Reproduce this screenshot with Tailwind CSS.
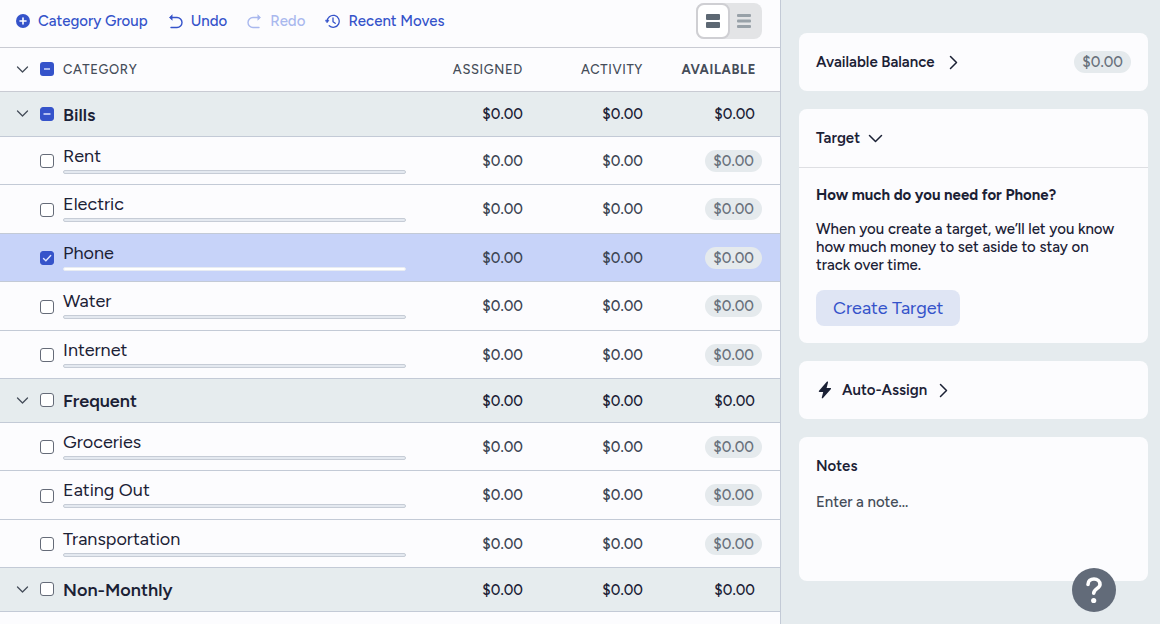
<!DOCTYPE html>
<html lang="en">
<head>
<meta charset="utf-8">
<meta name="viewport" content="width=device-width, initial-scale=1">
<title>Budget</title>
<script src="https://cdn.jsdelivr.net/npm/@tailwindcss/browser@4"></script>
</head>
<body class="flex h-screen overflow-hidden bg-[#e5ebee] font-['Figtree','Lato',sans-serif] text-[15px] text-[#1b2135]">

<main class="flex min-w-0 flex-1 flex-col border-r border-[#c3cad6] bg-[#fcfcfe]">
  <header class="flex h-12 shrink-0 items-center border-b border-[#c9cbd3] pr-[18px] pl-4 pb-[5px] text-[#3553ca]">
    <nav class="flex flex-1 items-center gap-5 font-medium" aria-label="Budget actions">
      <button type="button" class="flex items-center gap-2">
        <svg class="size-[14px]" viewBox="0 0 14 14" aria-hidden="true"><circle cx="7" cy="7" r="7" fill="currentColor"/><path d="M7 4v6M4 7h6" stroke="#fff" stroke-width="1.6" stroke-linecap="round"/></svg>
        Category Group
      </button>
      <button type="button" class="flex items-center gap-2">
        <svg class="size-[15px]" viewBox="0 0 15 15" fill="none" stroke="currentColor" stroke-width="1.4" stroke-linecap="round" stroke-linejoin="round" aria-hidden="true"><path d="M2.500 3.500H9a5 5 0 0 1 0 10H3"/><path d="M4 1 1.400 3.500 4 6Z" fill="currentColor" stroke-width=".6"/></svg>
        Undo
      </button>
      <button type="button" disabled class="flex items-center gap-2 text-[#a9b8ee]">
        <svg class="size-[15px]" viewBox="0 0 15 15" fill="none" stroke="currentColor" stroke-width="1.4" stroke-linecap="round" stroke-linejoin="round" aria-hidden="true"><path d="M12.500 3.500H6a5 5 0 0 0 0 10h6"/><path d="m11 1 2.600 2.500L11 6Z" fill="currentColor" stroke-width=".6"/></svg>
        Redo
      </button>
      <button type="button" class="flex items-center gap-2">
        <svg class="size-[15px]" viewBox="0 0 15 15" fill="none" stroke="currentColor" stroke-width="1.300" stroke-linecap="round" stroke-linejoin="round" aria-hidden="true"><path d="M2.200 7.500a6 6 0 1 1 2 4.300"/><path d="M8 4v3.700l2.200 1.600"/><path d="M.5 6.300h3.500L2.250 8.600Z" fill="currentColor" stroke-width=".6"/></svg>
        Recent Moves
      </button>
    </nav>
    <div class="flex rounded-lg bg-[#e3e4e6] text-[#5d6873]" role="group" aria-label="Row density">
      <button type="button" aria-label="Comfortable view" aria-pressed="true" class="grid h-9 w-[34px] place-items-center rounded-lg border-2 border-[#cfcfd3] bg-white">
        <svg class="h-[14px] w-[14px]" viewBox="0 0 14 14" fill="currentColor" aria-hidden="true"><rect width="14" height="6" rx="1"/><rect y="8" width="14" height="6" rx="1"/></svg>
      </button>
      <button type="button" aria-label="Compact view" aria-pressed="false" class="grid h-9 w-8 place-items-center pr-1 text-[#98a1a8]">
        <svg class="h-[14px] w-[14px]" viewBox="0 0 14 14" fill="currentColor" aria-hidden="true"><rect width="14" height="3" rx="1"/><rect y="5.500" width="14" height="3" rx="1"/><rect y="11" width="14" height="3" rx="1"/></svg>
      </button>
    </div>
  </header>

  <table class="w-full table-fixed border-collapse text-right font-medium">
    <colgroup><col class="w-10"><col class="w-[23px]"><col><col class="w-[117px]"><col class="w-[120px]"><col class="w-[137px]"></colgroup>
    <thead class="text-[13px] tracking-wider text-[#454d59]">
      <tr class="h-[43px] border-b border-[#c9cbd3]">
        <th class="p-0 pl-4 font-normal"><button type="button" aria-label="Collapse all groups" class="block"><svg class="h-[13px] w-[13px]" viewBox="0 0 13 13" fill="none" stroke="#454d59" stroke-width="1.300" stroke-linecap="round" stroke-linejoin="round" aria-hidden="true"><path d="m1.500 4 5 5 5-5"/></svg></button></th>
        <th class="p-0 font-normal"><span class="grid w-[14px] place-items-center"><input type="checkbox" checked aria-label="Select all" class="col-start-1 row-start-1 size-[14px] appearance-none rounded-[3px] bg-[#3553ca]"><svg class="pointer-events-none col-start-1 row-start-1 size-[14px]" viewBox="0 0 14 14" stroke="#dfe5ff" stroke-width="1.400" aria-hidden="true"><path d="M4 7h6"/></svg></span></th>
        <th scope="col" class="p-0 text-left font-medium">CATEGORY</th>
        <th scope="col" class="p-0 font-medium">ASSIGNED</th>
        <th scope="col" class="p-0 font-medium">ACTIVITY</th>
        <th scope="col" class="p-0 pr-6 font-bold">AVAILABLE</th>
      </tr>
    </thead>
    <tbody id="rows"></tbody>
  </table>
</main>

<aside class="flex w-[379px] shrink-0 flex-col gap-[18px] pt-[33px] pr-3 pl-[18px]">
  <section class="flex h-[58px] shrink-0 items-center justify-between rounded-lg bg-[#fcfcfe] px-[17px]">
    <button type="button" class="flex items-center gap-2.5 font-semibold">Available Balance
      <svg class="size-[15px]" viewBox="0 0 15 15" fill="none" stroke="currentColor" stroke-width="1.500" stroke-linecap="round" stroke-linejoin="round" aria-hidden="true"><path d="m5.500 1.500 6 6-6 6"/></svg>
    </button>
    <span class="rounded-full bg-[#e5eaed] px-2 font-medium leading-[22px] text-[#69717c]">$0.00</span>
  </section>

  <section class="shrink-0 rounded-lg bg-[#fcfcfe]">
    <div class="flex h-[59px] items-center border-b border-[#dedfe3] px-[17px]">
      <button type="button" class="flex items-center gap-2 font-semibold">Target
        <svg class="size-[15px]" viewBox="0 0 15 15" fill="none" stroke="currentColor" stroke-width="1.500" stroke-linecap="round" stroke-linejoin="round" aria-hidden="true"><path d="m1.500 4.500 6 6 6-6"/></svg>
      </button>
    </div>
    <div class="px-[17px] pt-[18px] pb-[17px]">
      <h2 class="font-bold leading-[18px]">How much do you need for Phone?</h2>
      <p class="mt-4 pr-2 font-medium leading-[18px]">When you create a target, we’ll let you know how much money to set aside to stay on track over time.</p>
      <button type="button" class="mt-4 h-9 rounded-lg bg-[#dfe5f4] px-[17px] text-lg text-[#3553ca]">Create Target</button>
    </div>
  </section>

  <section class="flex h-[58px] shrink-0 items-center rounded-lg bg-[#fcfcfe] px-[17px]">
    <button type="button" class="flex items-center gap-2 font-semibold">
      <svg class="h-[18px] w-[18px]" viewBox="0 0 18 18" fill="currentColor" aria-hidden="true"><path d="M10.800.8 3 9.700c-.5.600-.2 1.200.5 1.200h3.700L5.800 16.500c-.2.800.7 1.200 1.200.6l7.800-8.900c.5-.6.200-1.200-.5-1.200h-3.700L12 1.400c.2-.8-.7-1.200-1.200-.6Z"/></svg>
      Auto-Assign
      <svg class="size-[15px]" viewBox="0 0 15 15" fill="none" stroke="currentColor" stroke-width="1.500" stroke-linecap="round" stroke-linejoin="round" aria-hidden="true"><path d="m5.500 1.500 6 6-6 6"/></svg>
    </button>
  </section>

  <section class="flex h-36 shrink-0 flex-col rounded-lg bg-[#fcfcfe] px-[17px] pt-5">
    <label for="note" class="font-semibold leading-[18px]">Notes</label>
    <textarea id="note" placeholder="Enter a note..." class="mt-[18px] flex-1 resize-none font-medium leading-[18px] outline-none placeholder:text-[#454d59]"></textarea>
  </section>
</aside>

<button type="button" aria-label="Help" class="fixed right-11 bottom-3 grid size-11 place-items-center rounded-full bg-[#626b79]">
  <svg class="h-7 w-5" viewBox="0 0 20 28" fill="none" aria-hidden="true"><path d="M4 8.500C4 5 6.500 3 10 3s6 2.200 6 5.400c0 4-6.300 4.600-6.300 8.800" stroke="#fff" stroke-width="3.600" stroke-linecap="round"/><circle cx="9.700" cy="24.500" r="2.600" fill="#fff"/></svg>
</button>

<script>
const rows = [
  { group: 'Bills', state: 'mixed', h: 'h-[45px]' },
  { name: 'Rent', h: 'h-12' },
  { name: 'Electric', h: 'h-[49px]' },
  { name: 'Phone', h: 'h-12', state: 'on' },
  { name: 'Water', h: 'h-[49px]' },
  { name: 'Internet', h: 'h-12' },
  { group: 'Frequent', h: 'h-11' },
  { name: 'Groceries', h: 'h-12' },
  { name: 'Eating Out', h: 'h-[49px]' },
  { name: 'Transportation', h: 'h-12' },
  { group: 'Non-Monthly', h: 'h-11' },
];

const marks = { mixed: 'M4 7h6', on: 'm3.500 7.400 2.400 2.400 4.800-5.300' };

const checkbox = (label, state) => `
  <span class="grid w-[14px] place-items-center">
    <input type="checkbox" ${state ? 'checked' : ''} aria-label="Select ${label}" class="col-start-1 row-start-1 size-[14px] appearance-none rounded-[3px] border border-[#656b78] bg-white checked:border-[#3553ca] checked:bg-[#3553ca]">
    ${state ? `<svg class="pointer-events-none col-start-1 row-start-1 size-[14px]" viewBox="0 0 14 14" fill="none" stroke="#dfe5ff" stroke-width="1.400" stroke-linecap="round" aria-hidden="true"><path d="${marks[state]}"/></svg>` : ''}
  </span>`;

const groupRow = r => `
  <tr class="${r.h} border-b border-[#c3cad6] bg-[#e6ecee]">
    <td class="p-0 pl-4"><button type="button" aria-label="Collapse ${r.group}" class="block"><svg class="h-[13px] w-[13px]" viewBox="0 0 13 13" fill="none" stroke="#454d59" stroke-width="1.300" stroke-linecap="round" stroke-linejoin="round" aria-hidden="true"><path d="m1.500 4 5 5 5-5"/></svg></button></td>
    <td class="p-0">${checkbox(r.group, r.state)}</td>
    <th scope="row" class="p-0 pt-0.5 text-left text-lg font-semibold">${r.group}</th>
    <td class="p-0 pt-0.5">$0.00</td>
    <td class="p-0 pt-0.5">$0.00</td>
    <td class="p-0 pt-0.5 pr-[25px]">$0.00</td>
  </tr>`;

const categoryRow = r => `
  <tr class="${r.h} border-b border-[#c3cad6] ${r.state ? 'bg-[#c7d3f9]' : ''}">
    <td class="p-0"></td>
    <td class="p-0 pt-0.5">${checkbox(r.name, r.state)}</td>
    <th scope="row" class="p-0 pb-[3px] text-left text-lg font-normal leading-6">${r.name}
      <div class="mt-0.5 h-1 rounded-full border ${r.state ? 'border-[#e8ecf3] bg-white' : 'border-[#c6ccd6] bg-[#e4e9f0]'}"></div>
    </th>
    <td class="p-0 pt-0.5 text-[#3c4553]">$0.00</td>
    <td class="p-0 pt-0.5 text-[#3c4553]">$0.00</td>
    <td class="p-0 pt-0.5 pr-[18px]"><span class="inline-block rounded-full bg-[#e5eaed] px-2 leading-[22px] text-[#69717c]">$0.00</span></td>
  </tr>`;

document.getElementById('rows').innerHTML = rows.map(r => r.group ? groupRow(r) : categoryRow(r)).join('');
</script>
</body>
</html>
